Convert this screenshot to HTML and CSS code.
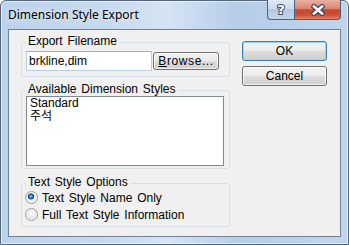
FILE: index.html
```html
<!DOCTYPE html>
<html lang="en">
<head>
  <meta charset="UTF-8" />
  <title>Dimension Style Export</title>
  <link rel="stylesheet" href="styles.css">
</head>
<body>
  <div class="window">
    <div class="titlebar">
      <span class="title">Dimension Style Export</span>
      <div class="caption-btns">
        <span class="cap help">?</span>
        <span class="cap close">
          <svg width="14" height="12" viewBox="0 0 14 12">
            <path d="M3 2.5 L11 9.5 M11 2.5 L3 9.5" stroke="#3b4a5e" stroke-width="5" stroke-linecap="square" fill="none"/>
            <path d="M3 2.5 L11 9.5 M11 2.5 L3 9.5" stroke="#fff" stroke-width="2.6" stroke-linecap="square" fill="none"/>
          </svg>
        </span>
      </div>
    </div>

    <div class="client">
      <div class="groups">
        <fieldset class="group g-file">
          <legend>Export Filename</legend>
          <div class="file-row">
            <div class="textbox">brkline,dim</div>
            <button class="btn browse"><u>B</u>rowse...</button>
          </div>
        </fieldset>

        <fieldset class="group g-styles">
          <legend>Available Dimension Styles</legend>
          <div class="listbox">
            <div class="item">Standard</div>
            <div class="item">주석</div>
          </div>
        </fieldset>

        <fieldset class="group g-text">
          <legend>Text Style Options</legend>
          <label class="radio"><span class="dot checked"></span>Text Style Name Only</label>
          <label class="radio"><span class="dot"></span>Full Text Style Information</label>
        </fieldset>
      </div>

      <div class="actions">
        <button class="btn default">OK</button>
        <button class="btn">Cancel</button>
      </div>
    </div>
  </div>
</body>
</html>
```

FILE: styles.css
```css
body {
  margin: 0;
  background: #ffffff;
  font-family: "Liberation Sans", "Noto Sans CJK KR", sans-serif;
  font-size: 12px;
}
.window {
  width: 349px;
  height: 245px;
  box-sizing: border-box;
  border: 1px solid #55657a;
  border-radius: 6px 6px 0 0;
  background: linear-gradient(to right, #bcd3ec 0%, #c6d9ee 30%, #d6e4f3 48%, #b6cde8 68%, #c0d5ec 100%);
  box-shadow: inset 0 0 0 1px rgba(255,255,255,0.55);
  display: flex;
  flex-direction: column;
  padding: 0 7px 7px 7px;
}
.titlebar {
  height: 28px;
  display: flex;
  align-items: flex-start;
}
.title {
  margin-top: 6px;
  font-family: "Noto Sans", sans-serif;
  font-size: 12px;
  line-height: 16px;
  color: #000;
  text-shadow: 0 0 6px rgba(255,255,255,0.9);
}
.caption-btns {
  margin-left: auto;
  margin-top: -1px;
  display: flex;
}
.cap {
  height: 20px;
  box-sizing: border-box;
  border: 1px solid #4f6178;
  border-top: none;
  display: flex;
  align-items: center;
  justify-content: center;
}
.help {
  width: 27px;
  border-right: none;
  border-radius: 0 0 0 4px;
  background: linear-gradient(#e0e9f5 0%, #cddbec 45%, #b4c8e1 50%, #c3d5ea 100%);
  font-family: "DejaVu Sans", sans-serif;
  font-weight: bold;
  font-size: 13px;
  color: #fff;
  -webkit-text-stroke: 2px #3b4a5e;
  paint-order: stroke fill;
}
.close {
  width: 47px;
  border-radius: 0 0 4px 0;
  background: linear-gradient(#eab0a3 0%, #dc8470 45%, #c5472e 52%, #cf5236 80%, #e0856a 100%);
}
.client {
  flex: 1;
  background: #f0f0f0;
  border: 1px solid #6f8298;
  display: flex;
}
.groups {
  padding: 5px 0 0 12px;
  display: flex;
  flex-direction: column;
}
.group {
  width: 209px;
  box-sizing: border-box;
  margin: 0;
  min-width: 0;
  border: 1px solid #d5dfe5;
  border-radius: 3px;
  padding: 2px 4px 5px;
}
.group legend {
  padding: 0 2px 2px;
  line-height: 12px;
  word-spacing: 1.5px;
}
.g-styles {
  margin-top: 6px;
  padding: 0 4px 2px;
}
.g-text {
  margin-top: 7px;
  padding: 0 4px 3px;
}
.file-row {
  display: flex;
  align-items: flex-start;
}
.textbox {
  width: 126px;
  height: 20px;
  box-sizing: border-box;
  background: #fff;
  border: 1px solid #b5cfe8;
  border-top-color: #8fb3d9;
  padding-left: 2px;
  line-height: 18px;
}
.btn {
  font-family: "Liberation Sans", sans-serif;
  font-size: 12px;
  color: #000;
  border: 1px solid #707070;
  border-radius: 3px;
  background: linear-gradient(#f2f2f2 0%, #ebebeb 50%, #dddddd 50%, #cfcfcf 100%);
  box-shadow: inset 0 0 0 1px rgba(255,255,255,0.7);
  padding: 0;
  word-spacing: 1px;
}
.browse {
  width: 66px;
  height: 18px;
  margin: 1px 0 0 1px;
  letter-spacing: 0.6px;
}
.listbox {
  width: 198px;
  height: 70px;
  box-sizing: border-box;
  margin-top: -1px;
  background: #fff;
  border: 1px solid #828790;
  padding: 0 3px;
}
.item {
  height: 13px;
  line-height: 13px;
  overflow: hidden;
}
.radio {
  display: flex;
  align-items: center;
  height: 17px;
  gap: 4px;
  margin-left: -1px;
  word-spacing: 1.5px;
}
.radio:first-of-type {
  margin-top: -1px;
}
.dot {
  width: 13px;
  height: 13px;
  box-sizing: border-box;
  border-radius: 50%;
  border: 1px solid #9a9c9e;
  background: radial-gradient(circle at 50% 40%, #ffffff 0%, #e6e6e6 55%, #cfcfcf 100%);
  box-shadow: inset 0 0 0 1px #f4f4f4;
}
.dot.checked {
  background: radial-gradient(circle at 45% 40%, #9fd0f5 0%, #2f7cc0 18%, #0f3f78 30%, #e2e2e2 38%, #f2f2f2 60%, #d6d6d6 100%);
}
.actions {
  margin-left: 12px;
  margin-top: 11px;
  width: 85px;
  display: flex;
  flex-direction: column;
  gap: 5px;
}
.actions .btn {
  height: 20px;
}
.btn.default {
  border-color: #3c7fb1;
  box-shadow: inset 0 0 0 1px #9cd6f6;
}
```
